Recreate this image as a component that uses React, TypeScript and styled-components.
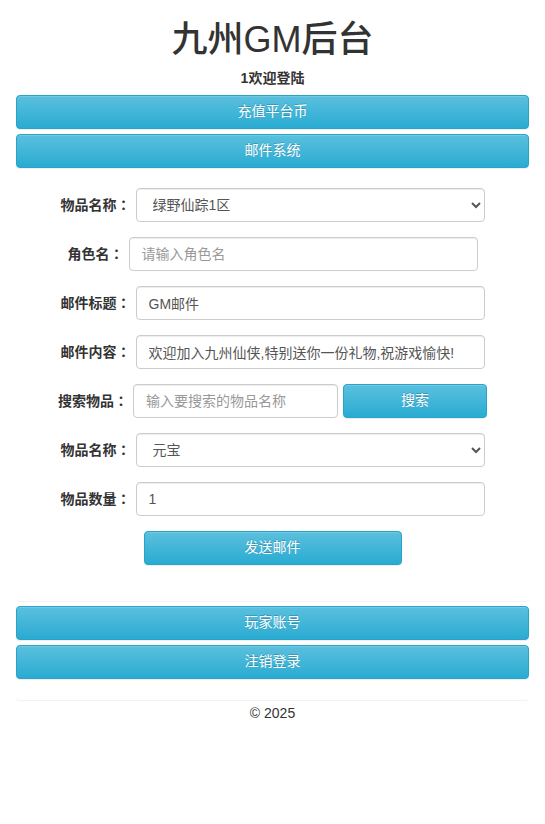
import React from 'react';
import styled, { createGlobalStyle } from 'styled-components';

const GlobalStyle = createGlobalStyle`
  * { box-sizing: border-box; }
  body {
    margin: 0;
    background: #fff;
    color: #333;
    font-family: "Liberation Sans", Arial, "Noto Sans CJK SC", sans-serif;
    font-size: 14px;
    line-height: 1.42857;
  }
`;

const Page = styled.div`
  padding: 0 16px;
`;

const Title = styled.h1`
  margin: 20px 0 0;
  font-size: 36px;
  font-weight: 500;
  line-height: 40px;
  text-align: center;
`;

const Welcome = styled.div`
  margin: 8px 0 7px;
  font-weight: bold;
  line-height: 20px;
  text-align: center;
`;

const InfoButton = styled.button<{ $width?: number }>`
  display: block;
  width: ${({ $width }) => ($width ? `${$width}px` : '100%')};
  height: 34px;
  margin: 0;
  padding: 0 12px;
  border: 1px solid #28a4c9;
  border-radius: 4px;
  background-color: #2aabd2;
  background-image: linear-gradient(to bottom, #5bc0de 0%, #2aabd2 100%);
  box-shadow: inset 0 1px 0 rgba(255, 255, 255, 0.15), 0 1px 1px rgba(0, 0, 0, 0.075);
  color: #fff;
  text-shadow: 0 -1px 0 rgba(0, 0, 0, 0.2);
  font: inherit;
  font-size: 14px;
  cursor: pointer;
`;

const MenuStack = styled.div`
  display: flex;
  flex-direction: column;
  gap: 5px;
`;

const Panel = styled.div`
  margin-top: 20px;
  padding-bottom: 36px;
  border-bottom: 1px solid #f2f2f2;
  border-radius: 0 0 4px 4px;
`;

const Form = styled.form`
  display: flex;
  flex-direction: column;
  align-items: center;
  gap: 15px;
`;

const Row = styled.div`
  display: flex;
  align-items: center;
  gap: 5px;
`;

const Label = styled.label`
  font-weight: bold;
  white-space: nowrap;
`;

/* centred full-width colon, as in the Traditional Chinese glyph set */
const Colon = styled.span`
  font-family: "Noto Sans CJK TC", sans-serif;
`;

const fieldCss = `
  height: 34px;
  border: 1px solid #ccc;
  border-radius: 4px;
  background: #fff;
  color: #555;
  font: inherit;
  font-size: 14px;
  box-shadow: inset 0 1px 1px rgba(0, 0, 0, 0.075);
  &::placeholder { color: #999; }
`;

const TextInput = styled.input<{ $width?: number }>`
  ${fieldCss}
  width: ${({ $width }) => $width ?? 349}px;
  padding: 6px 12px;
`;

const Select = styled.select`
  ${fieldCss}
  width: 349px;
  padding: 6px 8px 6px 12px;
`;

const Footer = styled.div`
  margin-top: 4px;
  padding-bottom: 21px;
  border-bottom: 1px solid #f2f2f2;
  border-radius: 0 0 4px 4px;
`;

const Copyright = styled.div`
  padding-top: 2px;
  text-align: center;
  line-height: 20px;
`;

function FieldLabel({ text }: { text: string }): JSX.Element {
  return (
    <Label>
      {text}
      <Colon>：</Colon>
    </Label>
  );
}

export default function App() {
  return (
    <Page>
      <GlobalStyle />
      <Title>九州GM后台</Title>
      <Welcome>1欢迎登陆</Welcome>
      <MenuStack>
        <InfoButton type="button">充值平台币</InfoButton>
        <InfoButton type="button">邮件系统</InfoButton>
      </MenuStack>

      <Panel>
        <Form onSubmit={(e) => e.preventDefault()}>
          <Row>
            <FieldLabel text="物品名称" />
            <Select defaultValue="1">
              <option value="1">绿野仙踪1区</option>
            </Select>
          </Row>
          <Row>
            <FieldLabel text="角色名" />
            <TextInput placeholder="请输入角色名" />
          </Row>
          <Row>
            <FieldLabel text="邮件标题" />
            <TextInput defaultValue="GM邮件" />
          </Row>
          <Row>
            <FieldLabel text="邮件内容" />
            <TextInput defaultValue="欢迎加入九州仙侠,特别送你一份礼物,祝游戏愉快!" />
          </Row>
          <Row>
            <FieldLabel text="搜索物品" />
            <TextInput $width={205} placeholder="输入要搜索的物品名称" />
            <InfoButton type="button" $width={144}>搜索</InfoButton>
          </Row>
          <Row>
            <FieldLabel text="物品名称" />
            <Select defaultValue="yb">
              <option value="yb">元宝</option>
            </Select>
          </Row>
          <Row>
            <FieldLabel text="物品数量" />
            <TextInput defaultValue="1" />
          </Row>
          <InfoButton type="submit" $width={258}>发送邮件</InfoButton>
        </Form>
      </Panel>

      <Footer>
        <MenuStack>
          <InfoButton type="button">玩家账号</InfoButton>
          <InfoButton type="button">注销登录</InfoButton>
        </MenuStack>
      </Footer>
      <Copyright>© 2025</Copyright>
    </Page>
  );
}
